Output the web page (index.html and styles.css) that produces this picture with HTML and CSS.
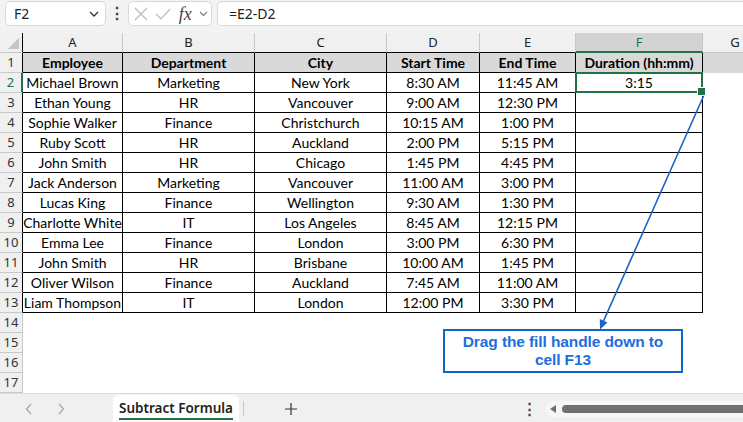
FILE: index.html
```html
<!DOCTYPE html>
<html lang="en">
<head>
    <meta charset="UTF-8">
    <meta name="viewport" content="width=device-width, initial-scale=1.0">
    <title>Subtract Formula</title>
    <link rel="stylesheet" href="styles.css">
</head>
<body>
<div class="app">
    <!-- formula bar -->
    <div class="formula-bar">
        <div class="name-box">
            <span>F2</span>
            <svg width="10" height="6" viewBox="0 0 10 6"><polyline points="1,1 5,5 9,1" fill="none" stroke="#333" stroke-width="1.3"/></svg>
        </div>
        <div class="bar-dots">&#8942;</div>
        <div class="fx-box">
            <svg width="14" height="14" viewBox="0 0 14 14"><path d="M1 1 L13 13 M13 1 L1 13" stroke="#b9b9b9" stroke-width="1.2"/></svg>
            <svg width="16" height="14" viewBox="0 0 16 14"><polyline points="1,7 6,12 15,2" fill="none" stroke="#b9b9b9" stroke-width="1.2"/></svg>
            <span class="fx">fx</span>
            <svg width="9" height="6" viewBox="0 0 9 6"><polyline points="1,1 4.5,4.5 8,1" fill="none" stroke="#777" stroke-width="1.1"/></svg>
        </div>
        <div class="formula-input">=E2-D2</div>
    </div>

    <!-- grid -->
    <div class="sheet">
        <table class="grid">
            <colgroup>
                <col class="c-row"><col class="c-a"><col class="c-b"><col class="c-c"><col class="c-d"><col class="c-e"><col class="c-f"><col class="c-g">
            </colgroup>
            <thead>
                <tr>
                    <th class="corner"></th>
                    <th>A</th><th>B</th><th>C</th><th>D</th><th>E</th><th class="active">F</th><th class="outside">G</th>
                </tr>
            </thead>
            <tbody>
                <tr class="head"><th class="rn">1</th><td>Employee</td><td>Department</td><td>City</td><td>Start Time</td><td>End Time</td><td>Duration (hh:mm)</td><td class="empty"></td></tr>
                <tr><th class="rn active">2</th><td>Michael Brown</td><td>Marketing</td><td>New York</td><td>8:30 AM</td><td>11:45 AM</td><td class="sel">3:15</td><td class="empty"></td></tr>
                <tr><th class="rn">3</th><td>Ethan Young</td><td>HR</td><td>Vancouver</td><td>9:00 AM</td><td>12:30 PM</td><td></td><td class="empty"></td></tr>
                <tr><th class="rn">4</th><td>Sophie Walker</td><td>Finance</td><td>Christchurch</td><td>10:15 AM</td><td>1:00 PM</td><td></td><td class="empty"></td></tr>
                <tr><th class="rn">5</th><td>Ruby Scott</td><td>HR</td><td>Auckland</td><td>2:00 PM</td><td>5:15 PM</td><td></td><td class="empty"></td></tr>
                <tr><th class="rn">6</th><td>John Smith</td><td>HR</td><td>Chicago</td><td>1:45 PM</td><td>4:45 PM</td><td></td><td class="empty"></td></tr>
                <tr><th class="rn">7</th><td>Jack Anderson</td><td>Marketing</td><td>Vancouver</td><td>11:00 AM</td><td>3:00 PM</td><td></td><td class="empty"></td></tr>
                <tr><th class="rn">8</th><td>Lucas King</td><td>Finance</td><td>Wellington</td><td>9:30 AM</td><td>1:30 PM</td><td></td><td class="empty"></td></tr>
                <tr><th class="rn">9</th><td>Charlotte White</td><td>IT</td><td>Los Angeles</td><td>8:45 AM</td><td>12:15 PM</td><td></td><td class="empty"></td></tr>
                <tr><th class="rn">10</th><td>Emma Lee</td><td>Finance</td><td>London</td><td>3:00 PM</td><td>6:30 PM</td><td></td><td class="empty"></td></tr>
                <tr><th class="rn">11</th><td>John Smith</td><td>HR</td><td>Brisbane</td><td>10:00 AM</td><td>1:45 PM</td><td></td><td class="empty"></td></tr>
                <tr><th class="rn">12</th><td>Oliver Wilson</td><td>Finance</td><td>Auckland</td><td>7:45 AM</td><td>11:00 AM</td><td></td><td class="empty"></td></tr>
                <tr><th class="rn">13</th><td>Liam Thompson</td><td>IT</td><td>London</td><td>12:00 PM</td><td>3:30 PM</td><td></td><td class="empty"></td></tr>
                <tr class="blank"><th class="rn">14</th><td></td><td></td><td></td><td></td><td></td><td></td><td></td></tr>
                <tr class="blank"><th class="rn">15</th><td></td><td></td><td></td><td></td><td></td><td></td><td></td></tr>
                <tr class="blank"><th class="rn">16</th><td></td><td></td><td></td><td></td><td></td><td></td><td></td></tr>
                <tr class="blank"><th class="rn">17</th><td></td><td></td><td></td><td></td><td></td><td></td><td></td></tr>
            </tbody>
        </table>
    </div>

    <!-- sheet tabs -->
    <div class="tabs">
        <div class="tab-nav">
            <svg width="8" height="12" viewBox="0 0 8 12"><polyline points="6,1 1.5,6 6,11" fill="none" stroke="#a6a6a6" stroke-width="1.2"/></svg>
            <svg width="8" height="12" viewBox="0 0 8 12"><polyline points="2,1 6.5,6 2,11" fill="none" stroke="#a6a6a6" stroke-width="1.2"/></svg>
        </div>
        <div class="tab"><span>Subtract Formula</span></div>
        <div class="tab-add">
            <span class="tab-sep"></span>
            <svg width="14" height="14" viewBox="0 0 14 14"><path d="M7 1 V13 M1 7 H13" stroke="#333" stroke-width="1.2"/></svg>
        </div>
        <div class="tab-dots">&#8942;</div>
        <div class="hscroll">
            <svg width="6" height="8" viewBox="0 0 6 8"><polygon points="6,0 6,8 0,4" fill="#6f6f6f"/></svg>
            <div class="thumb"></div>
        </div>
    </div>

    <!-- annotation -->
    <svg class="pointer" width="743" height="422" viewBox="0 0 743 422">
        <line x1="704" y1="95" x2="603.6" y2="320.8" stroke="#1b64c8" stroke-width="1.6"/>
        <polygon points="607.5,322.5 600,329.5 599.8,319" fill="#1b64c8"/>
    </svg>
    <div class="callout">Drag the fill handle down to<br>cell F13</div>
</div>
</body>
</html>
```

FILE: styles.css
```css
* {
    box-sizing: border-box;
}

body {
    margin: 0;
    background: #fff;
    font-family: Lato, "Liberation Sans", sans-serif;
    color: #000;
}

.app {
    position: relative;
    width: 743px;
    height: 422px;
    overflow: hidden;
}

/* Formula bar */
.formula-bar {
    height: 33px;
    background: #f3f3f3;
    display: flex;
    align-items: flex-start;
    padding: 1px 0 0 5px;
    font-family: "Noto Sans", "Open Sans", sans-serif;
    font-size: 14px;
    color: #222;
}

.name-box,
.fx-box,
.formula-input {
    height: 25px;
    background: #fff;
    border: 1px solid #d9d9d9;
    border-radius: 5px;
    display: flex;
    align-items: center;
}

.name-box {
    width: 101px;
    padding: 0 6px 0 8px;
    justify-content: space-between;
}

.bar-dots {
    width: 22px;
    text-align: center;
    line-height: 25px;
    font-size: 16px;
    font-weight: bold;
    color: #444;
}

.fx-box {
    width: 84px;
    padding: 0 3px 0 5px;
    justify-content: space-between;
}

.fx {
    font-family: "Liberation Serif", serif;
    font-style: italic;
    font-size: 18px;
    color: #444;
    line-height: 1;
}

.formula-input {
    flex: 1;
    margin-left: 5px;
    padding-left: 11px;
    border-right: none;
    border-radius: 5px 0 0 5px;
}

/* Grid */
.sheet {
    height: 360px;
    overflow: hidden;
}

.grid {
    border-collapse: separate;
    border-spacing: 0;
    table-layout: fixed;
    width: 767px;
    font-size: 14px;
}

.c-row { width: 23px; }
.c-a { width: 100px; }
.c-b { width: 132px; }
.c-c { width: 132px; }
.c-d { width: 93px; }
.c-e { width: 96px; }
.c-f { width: 127px; }
.c-g { width: 64px; }

.grid tr {
    height: 20px;
}

.grid th,
.grid td {
    padding: 0;
    height: 20px;
    line-height: 19px;
    text-align: center;
    white-space: nowrap;
    overflow: visible;
    border-right: 1px solid #000;
    border-bottom: 1px solid #000;
}

.grid thead th {
    background: #f0f0f0;
    font-weight: normal;
    font-family: "Noto Sans", "Open Sans", sans-serif;
    font-size: 13px;
    color: #222;
    border-right-color: #c8c8c8;
    border-bottom-color: #000;
}

.grid thead th.corner {
    position: relative;
    border-right-color: #000;
    border-bottom-color: #c8c8c8;
}

.grid thead th.corner::after {
    content: "";
    position: absolute;
    right: 3px;
    bottom: 3px;
    border-style: solid;
    border-width: 0 0 11px 11px;
    border-color: transparent transparent #c4c4c4 transparent;
}

.grid thead th.active {
    background: #d3d3d3;
    color: #217346;
    border-bottom: 2px solid #217346;
    line-height: 18px;
}

.grid thead th.outside {
    border-bottom-color: #c8c8c8;
    border-right: none;
}

.grid .rn {
    background: #f0f0f0;
    font-weight: normal;
    font-family: "Noto Sans", "Open Sans", sans-serif;
    font-size: 13px;
    color: #333;
    border-bottom-color: #c8c8c8;
}

.grid .rn.active {
    color: #217346;
    border-right: 2px solid #217346;
}

.grid .head td {
    background: #d9d9d9;
    font-weight: bold;
}

.grid td.empty,
.grid .blank td {
    border: none;
}

.grid .blank .rn {
    border-right-color: #c8c8c8;
}

.grid td.sel {
    position: relative;
}

.grid td.sel::after {
    content: "";
    position: absolute;
    top: -1px;
    left: -1px;
    right: -1px;
    bottom: -1px;
    border: 2px solid #217346;
}

.grid td.sel::before {
    content: "";
    position: absolute;
    right: -4px;
    bottom: -4px;
    width: 7px;
    height: 7px;
    background: #217346;
    border: 1px solid #fff;
    z-index: 1;
}

/* Sheet tabs */
.tabs {
    height: 29px;
    background: #f0f0f0;
    border-top: 1px solid #dcdcdc;
    display: flex;
    align-items: flex-end;
    font-family: "Noto Sans", "Open Sans", sans-serif;
}

.tab-nav {
    width: 113px;
    height: 27px;
    display: flex;
    align-items: center;
    gap: 24px;
    padding-left: 25px;
}

.tab {
    width: 126px;
    height: 27px;
    background: #fff;
    border-radius: 6px 6px 0 0;
    display: flex;
    align-items: center;
    justify-content: center;
    font-size: 13.5px;
    font-weight: 600;
    color: #222;
}

.tab span {
    line-height: 20px;
    border-bottom: 2px solid #217346;
    padding-top: 1px;
}

.tab-add {
    width: 300px;
    height: 27px;
    display: flex;
    align-items: center;
    padding-left: 4px;
    gap: 40px;
}

.tab-sep {
    width: 1px;
    height: 15px;
    background: #c8c8c8;
}

.tab-dots {
    width: 32px;
    height: 27px;
    line-height: 27px;
    font-size: 15px;
    font-weight: bold;
    color: #444;
    text-align: center;
    margin-left: -26px;
}

.hscroll {
    flex: 1;
    height: 16px;
    margin-bottom: 5px;
    background: #f6f6f6;
    border-radius: 8px 0 0 8px;
    display: flex;
    align-items: center;
    padding-left: 5px;
    gap: 6px;
}

.thumb {
    flex: 1;
    height: 8px;
    background: #6f6f6f;
    border-radius: 4px 0 0 4px;
}

/* Annotation */
.pointer {
    position: absolute;
    top: 0;
    left: 0;
    pointer-events: none;
}

.callout {
    position: absolute;
    left: 443px;
    top: 329px;
    width: 240px;
    height: 44px;
    background: #fff;
    border: 2px solid #1565c6;
    color: #1c6fdb;
    font-family: "Liberation Sans", Arial, sans-serif;
    font-weight: bold;
    font-size: 15.5px;
    line-height: 18px;
    text-align: center;
    padding-top: 2px;
    letter-spacing: -0.1px;
}
```
